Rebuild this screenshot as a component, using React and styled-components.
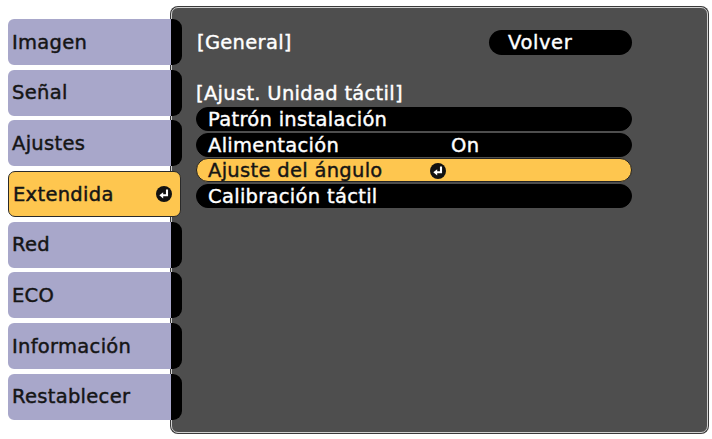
import React from "react";
import styled, { createGlobalStyle } from "styled-components";

const Global = createGlobalStyle`
  html, body { margin: 0; padding: 0; background: #ffffff; }
  body {
    font-family: "DejaVu Sans", "Liberation Sans", sans-serif;
  }
`;

const Page = styled.div`
  display: flex;
  align-items: flex-start;
  padding: 7px 4px 0 8px;
  width: 712px;
  height: 439px;
  box-sizing: border-box;
`;

const TabColumn = styled.div`
  display: flex;
  flex-direction: column;
  gap: 4.7px;
  width: 174px;
  margin-top: 12px;
  margin-right: -11px;
  position: relative;
  z-index: 2;
  flex-shrink: 0;
`;

const Tab = styled.div`
  height: 46px;
  box-sizing: border-box;
  display: flex;
  align-items: center;
  justify-content: space-between;
  padding: 0 8px 0 4px;
  font-size: 19.5px;
  letter-spacing: 0.3px;
  -webkit-text-stroke: 0.45px currentColor;
  color: #151515;
  border-radius: ${(p) => (p.$active ? "7px" : "6px 9px 9px 6px")};
  background: ${(p) =>
    p.$active ? "#fec64f" : "linear-gradient(to right, #a8a7ca 163px, #000 163px)"};
  border: ${(p) => (p.$active ? "1px solid #2a2a2a" : "none")};
  width: ${(p) => (p.$active ? "173px" : "174px")};
`;

const Panel = styled.div`
  width: 537px;
  height: 426px;
  box-sizing: border-box;
  background: #4e4e4e;
  border: 1px solid #d0d0d0;
  box-shadow: 0 0 0 1px #3a3a3a;
  border-radius: 7px;
  padding: 22px 75px 0 24px;
  display: flex;
  flex-direction: column;
  position: relative;
  z-index: 1;
  color: #fff;
  font-size: 19.5px;
  letter-spacing: 0.3px;
  -webkit-text-stroke: 0.4px currentColor;
`;

const HeaderRow = styled.div`
  display: flex;
  align-items: center;
  justify-content: space-between;
  height: 25px;
`;

const Bracket = styled.div`
  line-height: 24px;
  padding-left: ${(p) => p.$pad || 0}px;
`;

const BackButton = styled.div`
  width: 143px;
  height: 25px;
  border-radius: 13px;
  background: #000;
  display: flex;
  align-items: center;
  box-sizing: border-box;
  padding-left: 19px;
  letter-spacing: 0.6px;
`;

const Section = styled.div`
  margin-top: 26px;
  height: 24px;
  display: flex;
  align-items: center;
`;

const List = styled.div`
  margin-top: 2px;
  display: flex;
  flex-direction: column;
  gap: 1.5px;
`;

const Row = styled.div`
  height: 24px;
  box-sizing: border-box;
  border-radius: 12px;
  display: grid;
  grid-template-columns: 222px 21px 1fr;
  align-items: center;
  padding-left: 11px;
  background: ${(p) => (p.$active ? "#fec64f" : "#000")};
  color: ${(p) => (p.$active ? "#151515" : "#fff")};
  border: 1px solid ${(p) => (p.$active ? "#222" : "#000")};
  white-space: nowrap;
`;

const IconCell = styled.div`
  display: flex;
  align-items: center;
  justify-content: flex-start;
`;

const EnterIcon = ({ size = 15 }) => (
  <svg width={size} height={size} viewBox="0 0 16 16">
    <circle cx="8" cy="8" r="8" fill="#111" />
    <path d="M11 3.5 V9.3 H6.5" fill="none" stroke="#fff" strokeWidth="2.1" />
    <path d="M3.3 9.3 L7.2 6.2 L7.2 12.4 Z" fill="#fff" />
  </svg>
);

const tabs = ["Imagen", "Señal", "Ajustes", "Extendida", "Red", "ECO", "Información", "Restablecer"];

const rows = [
  { label: "Patrón instalación" },
  { label: "Alimentación", value: "On" },
  { label: "Ajuste del ángulo", active: true, icon: true },
  { label: "Calibración táctil" },
];

export default function App() {
  return (
    <>
      <Global />
      <Page>
        <TabColumn>
          {tabs.map((t) => (
            <Tab key={t} $active={t === "Extendida"}>
              <span>{t}</span>
              {t === "Extendida" && <EnterIcon size={16} />}
            </Tab>
          ))}
        </TabColumn>
        <Panel>
          <HeaderRow>
            <Bracket $pad={1}>[General]</Bracket>
            <BackButton>Volver</BackButton>
          </HeaderRow>
          <Section>[Ajust. Unidad táctil]</Section>
          <List>
            {rows.map((r) => (
              <Row key={r.label} $active={r.active}>
                <span>{r.label}</span>
                <IconCell>{r.icon && <EnterIcon size={16} />}</IconCell>
                <span>{r.value || ""}</span>
              </Row>
            ))}
          </List>
        </Panel>
      </Page>
    </>
  );
}
